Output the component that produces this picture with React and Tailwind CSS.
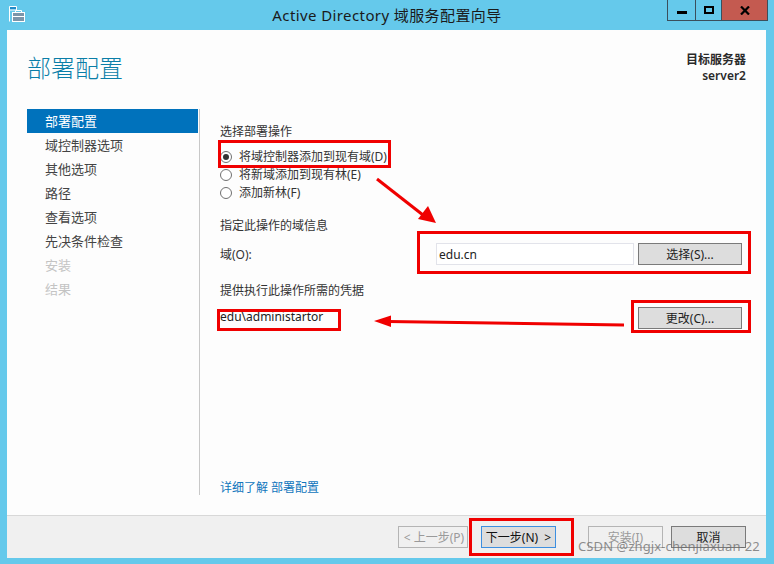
const font = { fontFamily: '"Noto Sans", "Noto Sans CJK SC", sans-serif' };

const steps = ["部署配置", "域控制器选项", "其他选项", "路径", "查看选项", "先决条件检查", "安装", "结果"];

function Radio({ checked, label }) {
  return (
    <div className="flex items-center h-[18px]">
      <span className="w-[12px] h-[12px] rounded-full border border-[#707070] bg-white flex items-center justify-center mr-[7px]">
        {checked && <span className="w-[6px] h-[6px] rounded-full bg-[#333]" />}
      </span>
      <span>{label}</span>
    </div>
  );
}

function Btn({ children, w, variant, className = "" }) {
  const styles = {
    normal: "border-[#7a7a7a] bg-[#dddddd] text-[#222]",
    focus: "border-[#3d8fe0] bg-[#dddddd] text-[#111]",
    disabled: "border-[#b4b4b4] bg-[#f0f0f0] text-[#9a9a9a]",
  }[variant || "normal"];
  return <div className={`h-[22px] border flex items-center justify-center pt-[1px] ${w} ${styles} ${className}`}>{children}</div>;
}

function Box({ className }) {
  return <div className={`absolute border-[3px] border-[#f00000] ${className}`} />;
}

export default function App() {
  return (
    <div style={font} className="relative w-[774px] h-[564px] overflow-hidden bg-[#65c9eb] text-[12px] leading-[18px] text-[#333] flex flex-col">
      <div className="h-[30px] flex shrink-0 relative">
        <div className="pl-[9px] pt-[6px]">
          <svg width="16" height="16" viewBox="0 0 16 16" className="block">
            <path d="M0.5 15.5V0.5H7.5V4" fill="none" stroke="#fff" />
            <rect x="1" y="1" width="6" height="2.5" fill="#1f8ac8" />
            <path d="M1 4H7" stroke="#fff" />
            <rect x="3.5" y="6.5" width="12" height="9" fill="#7b95aa" stroke="#fff" />
            <path d="M6.5 6.5V4.5H12.5V6.5M4 10.5H15" fill="none" stroke="#fff" />
          </svg>
        </div>
        <div className="flex-1 ml-[82px] text-center text-[15px] tracking-[0.4px] leading-[30px] text-[#1a1a1a]">Active Directory 域服务配置向导</div>
        <div className="flex h-[21px] mr-[6px] border border-t-0 border-[#3b4f5c]">
          <div className="w-[28px] border-r border-[#3b4f5c] flex items-center justify-center">
            <span className="w-[10px] h-[3px] bg-black mt-[4px]" />
          </div>
          <div className="w-[26px] border-r border-[#3b4f5c] flex items-center justify-center">
            <span className="w-[10px] h-[8px] border-2 border-black" />
          </div>
          <div className="w-[45px] bg-[#c45a50] flex items-center justify-center">
            <svg width="10" height="9" viewBox="0 0 10 9"><path d="M1 0.5L9 8.5M9 0.5L1 8.5" stroke="#000" strokeWidth="2.2" /></svg>
          </div>
        </div>
      </div>

      <div className="flex-1 ml-[7px] mr-[8px] mb-[6px] bg-[#fdfdfd] flex flex-col">
        <div className="h-[79px] shrink-0 flex justify-between pl-[20px] pr-[20px]">
          <div className="pt-[19px] text-[24px] leading-[38px] font-light text-[#0a7ea8]">部署配置</div>
          <div className="pt-[22px] text-right font-semibold leading-[16px] text-[#2a2a2a]">
            <div>目标服务器</div>
            <div>server2</div>
          </div>
        </div>

        <div className="flex-1 flex pl-[20px] pb-[20px]">
          <div className="w-[173px] h-[386px] shrink-0 border-r border-[#c8c8c8]">
            {steps.map((s, i) => (
              <div
                key={s}
                className={`w-[171px] h-[24px] leading-[24px] pl-[18px] text-[13px] ${
                  i === 0 ? "bg-[#0072bc] text-white" : i >= 6 ? "text-[#c4c4c4]" : "text-[#444]"
                }`}
              >
                {s}
              </div>
            ))}
          </div>

          <div className="flex-1 pl-[20px] pr-[24px] flex flex-col h-[386px]">
            <div className="mt-[14px]">选择部署操作</div>
            <div className="mt-[7px]">
              <Radio checked label="将域控制器添加到现有域(D)" />
              <Radio label="将新域添加到现有林(E)" />
              <Radio label="添加新林(F)" />
            </div>
            <div className="mt-[15px]">指定此操作的域信息</div>
            <div className="mt-[8px] flex items-center h-[22px]">
              <span className="w-[216px] shrink-0 pt-[1px]">域(O):</span>
              <div className="w-[198px] h-[22px] border border-[#e2e3ea] bg-white pl-[2px] pt-[1px] leading-[20px] text-[#222] mr-[4px]">edu.cn</div>
              <Btn w="w-[104px]">选择(S)...</Btn>
            </div>
            <div className="mt-[17px]">提供执行此操作所需的凭据</div>
            <div className="mt-[7px] flex items-center justify-between h-[22px]">
              <span className="text-[#222] -mt-[2px]">edu\administartor</span>
              <Btn w="w-[104px]">更改(C)...</Btn>
            </div>
            <div className="mt-auto mb-[-2px] text-[#0f75bc]">详细了解 部署配置</div>
          </div>
        </div>

        <div className="h-[43px] shrink-0 bg-[#f0f0f0] border-t border-[#d8d8d8] pt-[10px] pl-[391px] flex">
          <Btn w="w-[70px]" variant="disabled" className="pl-[2px]">&lt; 上一步(P)</Btn>
          <Btn w="w-[75px]" variant="focus" className="ml-[13px]">下一步(N)&nbsp;&nbsp;&gt;</Btn>
          <Btn w="w-[75px]" variant="disabled" className="ml-[32px]">安装(I)</Btn>
          <Btn w="w-[75px]" className="ml-[8px]">取消</Btn>
        </div>
      </div>

      <Box className="left-[218px] top-[140px] w-[173px] h-[28px]" />
      <Box className="left-[417px] top-[231px] w-[334px] h-[43px]" />
      <Box className="left-[631px] top-[300px] w-[120px] h-[33px]" />
      <Box className="left-[217px] top-[309px] w-[124px] h-[22px]" />
      <Box className="left-[469px] top-[518px] w-[105px] h-[38px]" />

      <svg className="absolute left-0 top-0 pointer-events-none" width="774" height="564" viewBox="0 0 774 564">
        <path d="M377 179L423 215" stroke="#f00000" strokeWidth="3" />
        <path d="M436 223L418 219L428 206Z" fill="#f00000" />
        <path d="M624 325L388 321.5" stroke="#f00000" strokeWidth="3" />
        <path d="M374 321L391 315.5L391 327Z" fill="#f00000" />
      </svg>

      <div className="absolute left-[578px] top-[537px] text-[13px] tracking-[0.1px] leading-[18px] text-[#6a6a6a]/75 whitespace-nowrap">CSDN @zhgjx-chenjiaxuan-22</div>
    </div>
  );
}
